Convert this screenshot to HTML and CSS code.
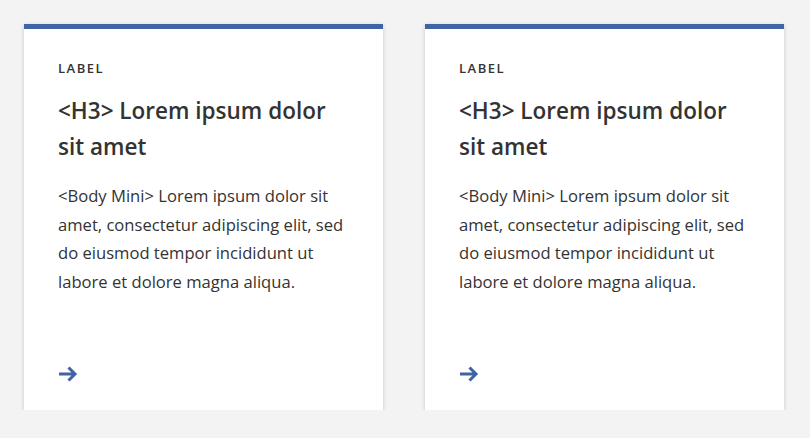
FILE: index.html
```html
<!DOCTYPE html>
<html>
<head>
<meta charset="utf-8">
<link rel="stylesheet" href="styles.css">
</head>
<body>
<div class="cards">
  <div class="card">
    <div class="label">LABEL</div>
    <h3 class="title">&lt;H3&gt; Lorem ipsum dolor sit amet</h3>
    <p class="body">&lt;Body Mini&gt; Lorem ipsum dolor sit amet, consectetur adipiscing elit, sed do eiusmod tempor incididunt ut labore et dolore magna aliqua.</p>
    <div class="arrow"><svg width="20" height="18" viewBox="0 0 20 18"><path d="M1 9H17M10.5 2.5L17 9L10.5 15.5" fill="none" stroke="#3f63a3" stroke-width="3"/></svg></div>
  </div>
  <div class="card">
    <div class="label">LABEL</div>
    <h3 class="title">&lt;H3&gt; Lorem ipsum dolor sit amet</h3>
    <p class="body">&lt;Body Mini&gt; Lorem ipsum dolor sit amet, consectetur adipiscing elit, sed do eiusmod tempor incididunt ut labore et dolore magna aliqua.</p>
    <div class="arrow"><svg width="20" height="18" viewBox="0 0 20 18"><path d="M1 9H17M10.5 2.5L17 9L10.5 15.5" fill="none" stroke="#3f63a3" stroke-width="3"/></svg></div>
  </div>
</div>
</body>
</html>
```
FILE: styles.css
```css
html, body { margin: 0; padding: 0; }
body {
  background: #f3f3f3;
  font-family: "Open Sans", sans-serif;
  color: #333;
}
.cards {
  display: flex;
  gap: 42px;
  padding: 24px 0 0 24px;
}
.card {
  width: 359px;
  height: 386px;
  background: #fff;
  border-top: 5px solid #4065a6;
  box-shadow: 0 1px 4px rgba(0,0,0,0.18);
  padding: 0 34px;
  box-sizing: border-box;
  display: flex;
  flex-direction: column;
}
.label {
  margin-top: 30px;
  font-size: 13px;
  font-weight: 600;
  letter-spacing: 1.5px;
  line-height: 18px;
}
.title {
  margin: 16px 0 0;
  font-size: 22.5px;
  font-weight: 600;
  line-height: 36px;
  width: 285px;
}
.body {
  margin: 17px 0 0;
  font-size: 16.6px;
  line-height: 28.7px;
  width: 296px;
}
.arrow {
  margin-top: auto;
  margin-bottom: 27px;
  height: 18px;
}
.arrow svg { display: block; }
```
